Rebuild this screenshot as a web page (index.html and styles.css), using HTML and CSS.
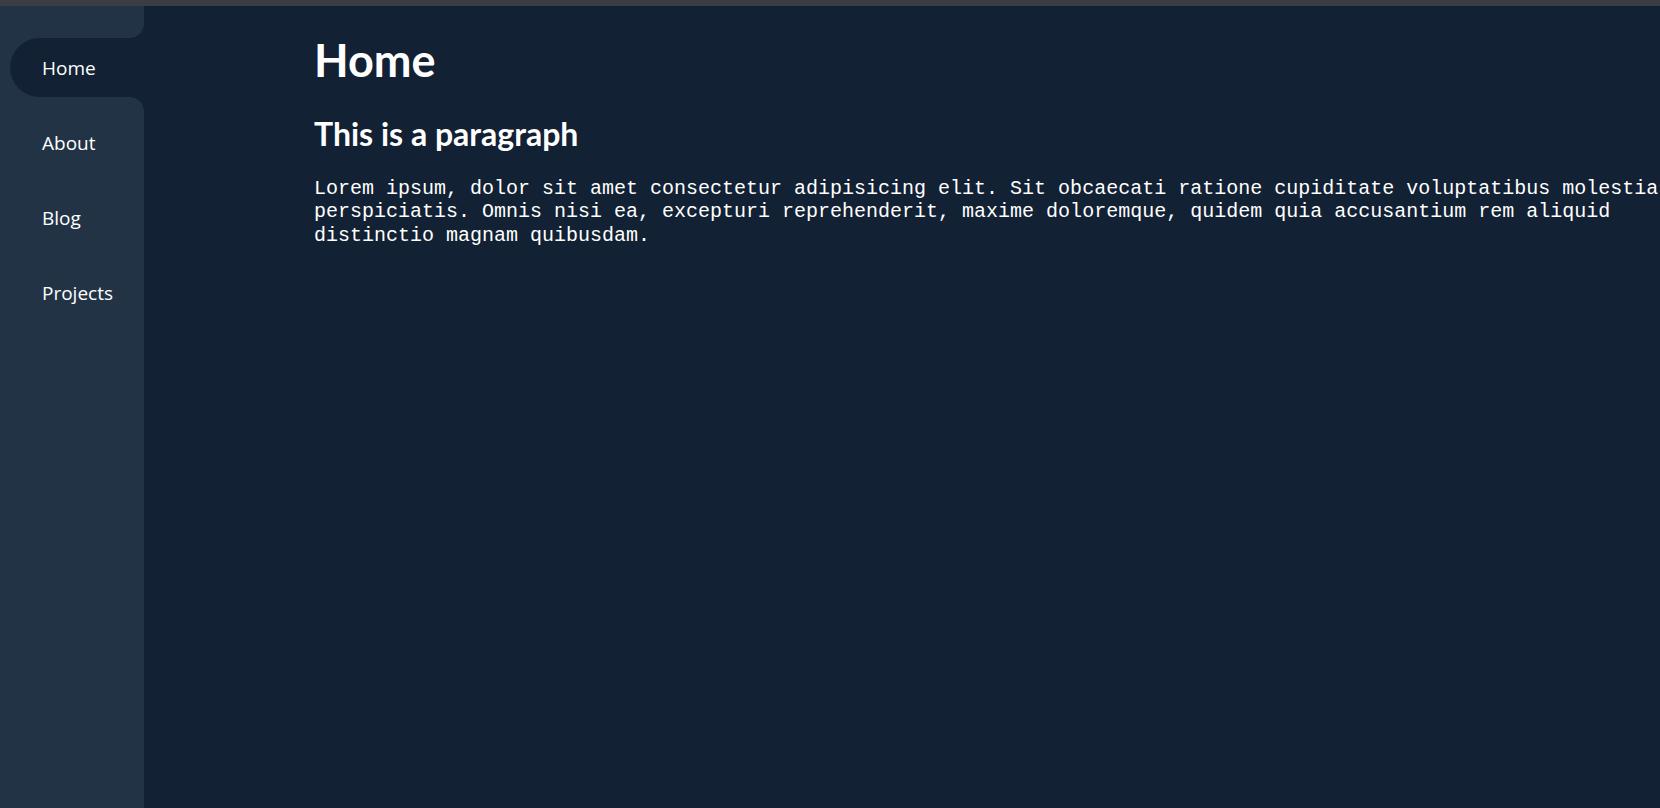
FILE: index.html
```html
<!DOCTYPE html>
<html lang="en">
<head>
<meta charset="utf-8">
<title>Home</title>
<link rel="stylesheet" href="styles.css">
</head>
<body>
<div class="topstrip"></div>
<div class="layout">
  <nav class="sidebar">
    <ul class="nav-list">
      <li class="nav-item active"><a href="#">Home</a></li>
      <li class="nav-item"><a href="#">About</a></li>
      <li class="nav-item"><a href="#">Blog</a></li>
      <li class="nav-item"><a href="#">Projects</a></li>
    </ul>
  </nav>
  <main class="content">
    <h1 class="title">Home</h1>
    <h2 class="subtitle">This is a paragraph</h2>
    <p class="text">Lorem ipsum, dolor sit amet consectetur adipisicing elit. Sit obcaecati ratione cupiditate voluptatibus molestias perspiciatis. Omnis nisi ea, excepturi reprehenderit, maxime doloremque, quidem quia accusantium rem aliquid distinctio magnam quibusdam.</p>
  </main>
</div>
</body>
</html>
```
FILE: styles.css
```css
html, body {
  margin: 0;
  padding: 0;
  height: 100%;
  overflow: hidden;
}
body {
  background: #122133;
  color: #ffffff;
  font-family: "Open Sans", "Noto Sans", sans-serif;
  display: flex;
  flex-direction: column;
}
.topstrip {
  height: 6px;
  background: #3a3e42;
  flex: none;
}
.layout {
  flex: 1;
  display: flex;
  min-height: 0;
}
.sidebar {
  width: 144px;
  flex: none;
  background: #233346;
}
.nav-list {
  list-style: none;
  margin: 0;
  padding: 32px 0 0 10px;
}
.nav-item {
  position: relative;
  height: 59px;
  margin-bottom: 16px;
  display: flex;
  align-items: center;
  border-radius: 30px 0 0 30px;
}
.nav-item a {
  color: #ffffff;
  text-decoration: none;
  font-size: 19px;
  padding-left: 32px;
}
.nav-item.active {
  background: #122133;
}
.nav-item.active::before,
.nav-item.active::after {
  content: "";
  position: absolute;
  right: 0;
  width: 14px;
  height: 14px;
}
.nav-item.active::before {
  top: -14px;
  background: radial-gradient(circle at 0 0, transparent 13.5px, #122133 14px);
}
.nav-item.active::after {
  bottom: -14px;
  background: radial-gradient(circle at 0 100%, transparent 13.5px, #122133 14px);
}
.content {
  flex: none;
  width: 1380px;
  padding: 27px 0 0 170px;
}
.title {
  margin: 0;
  font-family: "Lato", "Open Sans", sans-serif;
  font-size: 45px;
  line-height: 54px;
  font-weight: 700;
}
.subtitle {
  margin: 29px 0 0;
  font-family: "Lato", "Open Sans", sans-serif;
  font-size: 32px;
  line-height: 36px;
  font-weight: 700;
}
.text {
  margin: 25px 0 0;
  font-family: "Liberation Mono", "Courier New", monospace;
  font-size: 20px;
  line-height: 23.3px;
}
```
